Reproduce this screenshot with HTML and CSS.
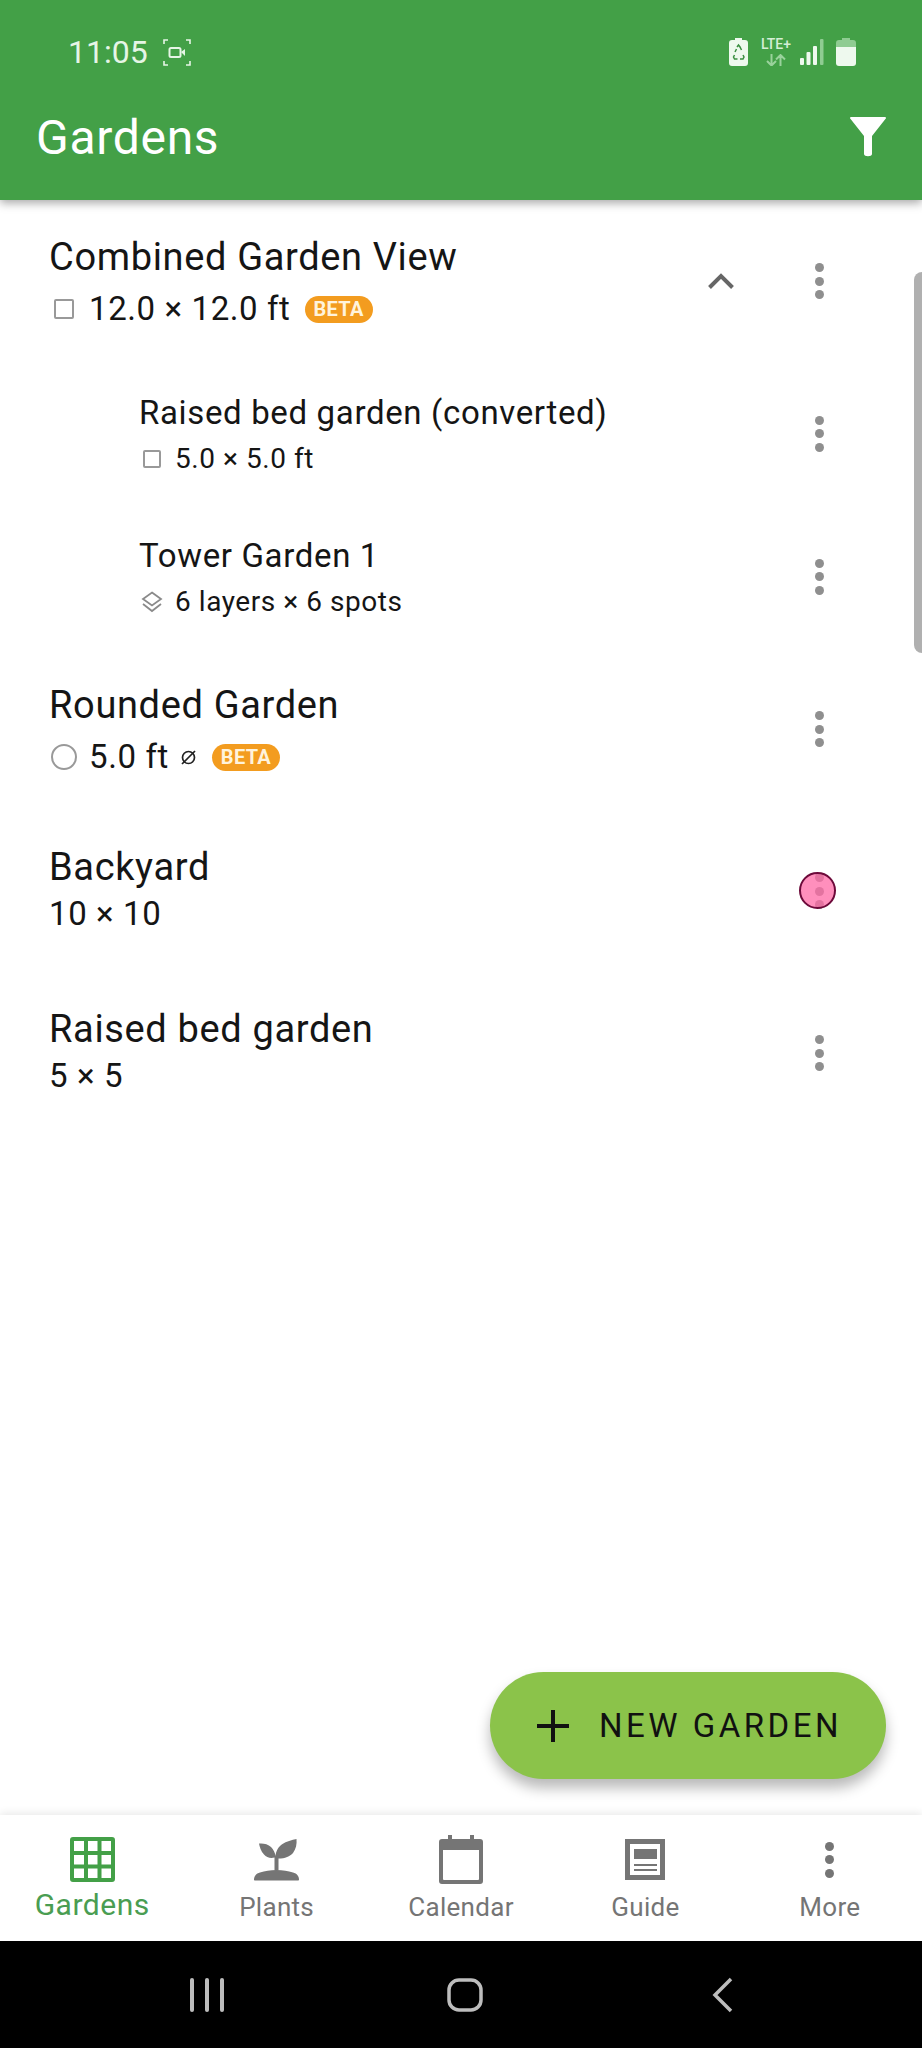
FILE: index.html
```html
<!DOCTYPE html>
<html lang="en">
<head>
  <meta charset="UTF-8" />
  <meta name="viewport" content="width=device-width, initial-scale=1.0"/>
  <title>Gardens</title>
  <link rel="stylesheet" href="styles.css">
</head>
<body>
  <div class="screen">
    <header class="appbar">
      <div class="status">
        <span class="clock">11:05</span>
        <svg class="rec" width="28" height="27" viewBox="0 0 28 27" fill="none" stroke="#e6f5e6" stroke-width="1.600">
          <path d="M1 5V1h4M23 1h4v4M27 22v4h-4M5 26H1v-4"/>
          <rect x="6.500" y="9" width="11" height="9" rx="1.500" stroke-width="2"/>
          <path d="M18 13l4-3v7z" fill="#e6f5e6" stroke="none"/>
        </svg>
        <span class="status-right">
          <svg width="19" height="28" viewBox="0 0 19 28">
            <path d="M6 0h7v2h3a3 3 0 0 1 3 3v20a3 3 0 0 1-3 3H3a3 3 0 0 1-3-3V5a3 3 0 0 1 3-3h3z" fill="#eef9ee"/>
            <path d="M8 9l1.500-2 1.500 2 1.500 3M5.500 17l-1 2 1 2h3M11 21h3l1-2-1-2M6 14l1.500-3" fill="none" stroke="#3a8f40" stroke-width="1.500"/>
          </svg>
          <span class="lte">
            <span class="lte-text">LTE+</span>
            <svg width="20" height="12" viewBox="0 0 20 12" fill="none" stroke="#9ad29c" stroke-width="2">
              <path d="M5.500 0v11M1 7l4.500 4.500L10 7M14.500 12V1M10 5.500L14.500 1 19 5.500"/>
            </svg>
          </span>
          <svg class="signal" width="24" height="26" viewBox="0 0 24 26">
            <rect x="0" y="19" width="4" height="7" rx="1" fill="#eef9ee"/>
            <rect x="6.500" y="13" width="4" height="13" rx="1" fill="#eef9ee"/>
            <rect x="13" y="7" width="4" height="19" rx="1" fill="#eef9ee"/>
            <rect x="20" y="0" width="3.500" height="26" rx="1" fill="#8fcc92"/>
          </svg>
          <svg width="20" height="28" viewBox="0 0 20 28">
            <path d="M6 0h8v2h3a3 3 0 0 1 3 3v4H0V5a3 3 0 0 1 3-3h3z" fill="#8fcc92"/>
            <path d="M0 9h20v16a3 3 0 0 1-3 3H3a3 3 0 0 1-3-3z" fill="#eef9ee"/>
          </svg>
        </span>
      </div>
      <div class="toolbar">
        <h1 class="page-title">Gardens</h1>
        <svg width="36" height="40" viewBox="0 0 36 40">
          <path d="M1 0h34a1 1 0 0 1 .8 1.600L22 19v18c0 3-8 3-8 0V19L.2 1.600A1 1 0 0 1 1 0z" fill="#fff"/>
        </svg>
      </div>
    </header>

    <main class="list">
      <div class="row">
        <div class="row-text">
          <div class="name">Combined Garden View</div>
          <div class="meta">
            <span class="shape-square"></span>
            <span>12.0 × 12.0 ft</span>
            <span class="beta">BETA</span>
          </div>
        </div>
        <svg class="chevron" width="26" height="16" viewBox="0 0 26 16" fill="none" stroke="#666" stroke-width="4">
          <path d="M1.500 14.500L13 3l11.500 11.500"/>
        </svg>
        <div class="kebab"><i></i><i></i><i></i></div>
      </div>

      <div class="row row-child">
        <div class="row-text">
          <div class="name">Raised bed garden (converted)</div>
          <div class="meta">
            <span class="shape-square"></span>
            <span>5.0 × 5.0 ft</span>
          </div>
        </div>
        <div class="kebab"><i></i><i></i><i></i></div>
      </div>

      <div class="row row-child">
        <div class="row-text">
          <div class="name">Tower Garden 1</div>
          <div class="meta">
            <svg class="shape-layers" width="22" height="22" viewBox="0 0 22 22" fill="none" stroke="#8a8a8a" stroke-width="1.800">
              <path d="M11 1.500L20 8l-9 6.500L2 8z"/>
              <path d="M2 13l9 7 9-7"/>
            </svg>
            <span>6 layers × 6 spots</span>
          </div>
        </div>
        <div class="kebab"><i></i><i></i><i></i></div>
      </div>

      <div class="row">
        <div class="row-text">
          <div class="name">Rounded Garden</div>
          <div class="meta">
            <span class="shape-circle"></span>
            <span>5.0 ft</span>
            <svg class="diameter" width="17" height="17" viewBox="0 0 17 17" fill="none" stroke="#222" stroke-width="1.700">
              <circle cx="8.500" cy="8.500" r="6"/>
              <path d="M2 15L15 2"/>
            </svg>
            <span class="beta">BETA</span>
          </div>
        </div>
        <div class="kebab"><i></i><i></i><i></i></div>
      </div>

      <div class="row">
        <div class="row-text">
          <div class="name">Backyard</div>
          <div class="meta meta-plain">10 × 10</div>
        </div>
        <div class="kebab"><i></i><i></i><i></i><span class="touch"></span></div>
      </div>

      <div class="row">
        <div class="row-text">
          <div class="name">Raised bed garden</div>
          <div class="meta meta-plain">5 × 5</div>
        </div>
        <div class="kebab"><i></i><i></i><i></i></div>
      </div>

      <div class="scrollbar"></div>

      <button class="fab">
        <svg width="32" height="32" viewBox="0 0 32 32" fill="#111">
          <rect x="14" y="0" width="4" height="32"/>
          <rect x="0" y="14" width="32" height="4"/>
        </svg>
        <span>NEW GARDEN</span>
      </button>
    </main>

    <nav class="tabs">
      <div class="tab tab-active">
        <svg width="45" height="45" viewBox="0 0 45 45" fill="#43a047">
          <path fill-rule="evenodd" d="M3 0h39a3 3 0 0 1 3 3v39a3 3 0 0 1-3 3H3a3 3 0 0 1-3-3V3a3 3 0 0 1 3-3zM4 4v10h10V4zM18 4v10h9.500V4zM31.500 4v10H41V4zM4 18v9.500h10V18zM18 18v9.500h9.500V18zM31.500 18v9.500H41V18zM4 31.500V41h10v-9.500zM18 31.500V41h9.500v-9.500zM31.500 31.500V41H41v-9.500z"/>
        </svg>
        <span>Gardens</span>
      </div>
      <div class="tab">
        <svg width="45" height="42" viewBox="0 0 45 42" fill="#757575">
          <path d="M0 41c0-3 2-6 6-7 5-1.500 10-2.500 16.500-2.500S34 32.500 39 34c4 1 6 4 6 7 0 .6-.4 1-1 1H1c-.6 0-1-.4-1-1z"/>
          <path d="M20.500 32V19c-4 1-8 0-10.500-3C7 13 5.500 8 5 5c4-.5 9 .5 12 3.500 2.500 2.500 4 5.500 4.500 9 .5-5 3-9.500 7-12C32 3 38 1.500 42.500.5c.5 5-.5 10-3.500 14-3 3.500-8 5.500-14.500 5.500V32z"/>
        </svg>
        <span>Plants</span>
      </div>
      <div class="tab">
        <svg width="44" height="49" viewBox="0 0 44 49">
          <path fill="#757575" fill-rule="evenodd" d="M9 0h4v4h18V0h4v4h6a3 3 0 0 1 3 3v39a3 3 0 0 1-3 3H3a3 3 0 0 1-3-3V7a3 3 0 0 1 3-3h6zM4 15v29a1 1 0 0 0 1 1h34a1 1 0 0 0 1-1V15z"/>
        </svg>
        <span>Calendar</span>
      </div>
      <div class="tab">
        <svg width="40" height="41" viewBox="0 0 40 41">
          <path fill="#757575" fill-rule="evenodd" d="M0 0h40v41H0zM5 5v31h30V5z"/>
          <rect x="9" y="10" width="23" height="10" fill="#757575"/>
          <rect x="9" y="25" width="23" height="2" fill="#757575"/>
          <rect x="9" y="30" width="23" height="2" fill="#757575"/>
        </svg>
        <span>Guide</span>
      </div>
      <div class="tab">
        <div class="kebab kebab-nav"><i></i><i></i><i></i></div>
        <span>More</span>
      </div>
    </nav>

    <footer class="sysnav">
      <svg width="34" height="34" viewBox="0 0 34 34" fill="#bdbdbd">
        <rect x="0" y="0" width="4" height="34" rx="2"/>
        <rect x="15" y="0" width="4" height="34" rx="2"/>
        <rect x="30" y="0" width="4" height="34" rx="2"/>
      </svg>
      <svg width="36" height="34" viewBox="0 0 36 34" fill="none" stroke="#bdbdbd" stroke-width="3.500">
        <rect x="2" y="2" width="32" height="30" rx="10"/>
      </svg>
      <svg class="sysnav-back" width="22" height="36" viewBox="0 0 22 36" fill="none" stroke="#bdbdbd" stroke-width="3.500">
        <path d="M20 2L4 18l16 16"/>
      </svg>
    </footer>
  </div>
</body>
</html>
```
FILE: styles.css
```css
:root {
  --green: #43a047;
  --lime: #8bc34a;
  --orange: #f39c1f;
  --text: #151515;
  --grey: #757575;
}

* {
  box-sizing: border-box;
}

body {
  margin: 0;
  background: #fff;
  color: var(--text);
  font-family: Roboto, 'Noto Sans', sans-serif;
}

.screen {
  width: 922px;
  height: 2048px;
  display: flex;
  flex-direction: column;
  overflow: hidden;
}

/* top green bar */
.appbar {
  height: 200px;
  flex: none;
  background: var(--green);
  color: #fff;
  position: relative;
  z-index: 2;
  box-shadow: 0 3px 9px rgba(0, 0, 0, 0.35);
}

.status {
  height: 110px;
  padding: 38px 66px 0 68px;
  display: flex;
  align-items: flex-start;
}

.clock {
  font-size: 32px;
  line-height: 28px;
  color: #e6f5e6;
}

.rec {
  margin: 1px 0 0 15px;
}

.status-right {
  margin-left: auto;
  display: flex;
  align-items: flex-start;
}

.lte {
  width: 32px;
  margin-left: 12px;
  display: flex;
  flex-direction: column;
  align-items: center;
  gap: 4px;
}

.lte-text {
  font-size: 14px;
  line-height: 12px;
  font-weight: 500;
  color: #d5eed6;
  white-space: nowrap;
}

.signal {
  margin: 1px 12px 0 8px;
}

.toolbar {
  padding: 0 36px 0 36px;
  display: flex;
  justify-content: space-between;
  align-items: flex-start;
}

.page-title {
  margin: 0;
  font-size: 48px;
  line-height: 56px;
  font-weight: 400;
  letter-spacing: 0.7px;
}

.toolbar svg {
  margin-top: 7px;
}

/* garden rows */
.list {
  flex: 1;
  position: relative;
}

.row {
  height: 162px;
  padding: 0 94px 0 49px;
  display: flex;
  align-items: center;
}

.row-text {
  flex: 1;
}

.name {
  font-size: 38px;
  line-height: 48px;
  letter-spacing: 0.65px;
}

.meta {
  margin-top: 8px;
  display: flex;
  align-items: center;
  font-size: 33px;
  line-height: 40px;
  letter-spacing: 0.6px;
}

.meta-plain {
  display: block;
  margin-top: 3px;
  margin-bottom: 5px;
}

.row-child {
  height: 143px;
  padding-left: 139px;
}

.row-child .name {
  font-size: 33px;
  line-height: 44px;
}

.row-child .meta {
  margin-top: 6px;
  font-size: 28px;
  line-height: 36px;
  letter-spacing: 0.55px;
}

.shape-square {
  width: 20px;
  height: 20px;
  margin: 0 15px 0 5px;
  border: 2.500px solid #999;
  border-radius: 2px;
}

.row-child .shape-square {
  width: 18px;
  height: 18px;
  margin: 0 14px 0 4px;
}

.shape-layers {
  margin: 0 12px 0 2px;
}

.shape-circle {
  width: 26px;
  height: 26px;
  margin: 0 12px 0 2px;
  border: 2.500px solid #999;
  border-radius: 50%;
}

.diameter {
  margin-left: 11px;
}

.beta {
  margin-left: 14px;
  padding: 0 9px;
  height: 27px;
  border-radius: 14px;
  background: var(--orange);
  color: #fff3dc;
  font-size: 20px;
  line-height: 27px;
  font-weight: 700;
  letter-spacing: 0.3px;
}

.diameter + .beta {
  margin-left: 15px;
}

.chevron {
  margin-right: 76px;
}

.kebab {
  width: 18px;
  position: relative;
  display: flex;
  flex-direction: column;
  align-items: center;
  gap: 4.500px;
}

.kebab i {
  width: 9px;
  height: 9px;
  border-radius: 50%;
  background: #8f8f8f;
}

.kebab-nav i {
  background: var(--grey);
}

/* touch indicator left on by the screen recorder */
.touch {
  position: absolute;
  left: -11px;
  top: -1px;
  width: 37px;
  height: 37px;
  border-radius: 50%;
  border: 2.500px solid #6d0a3a;
  background: rgba(255, 105, 165, 0.75);
}

.scrollbar {
  position: absolute;
  right: 0;
  top: 72px;
  width: 8px;
  height: 381px;
  border-radius: 8px 0 0 8px;
  background: #b0b0b0;
}

.fab {
  position: absolute;
  right: 36px;
  bottom: 36px;
  width: 396px;
  height: 107px;
  padding: 0 0 0 47px;
  border: none;
  border-radius: 54px;
  background: var(--lime);
  color: #111;
  display: flex;
  align-items: center;
  gap: 30px;
  font-family: inherit;
  font-size: 33px;
  letter-spacing: 3.500px;
  box-shadow: 0 9px 14px rgba(0, 0, 0, 0.28);
}

/* bottom tabs */
.tabs {
  height: 126px;
  flex: none;
  background: #fff;
  display: flex;
  position: relative;
  box-shadow: 0 -2px 8px rgba(0, 0, 0, 0.09);
}

.tab {
  flex: 1;
  height: 100%;
  padding-top: 20px;
  display: flex;
  flex-direction: column;
  align-items: center;
  color: var(--grey);
  font-size: 26px;
  letter-spacing: 0.3px;
}

.tab svg,
.tab .kebab {
  height: 49px;
  flex: none;
}

.tab .kebab {
  justify-content: center;
}

.tab-active {
  color: #4a9d52;
  font-size: 30px;
  letter-spacing: 0.5px;
}

.tab span {
  line-height: 34px;
  margin-top: 6px;
}

.tab-active span {
  margin-top: 4px;
}

/* android nav */
.sysnav {
  height: 107px;
  flex: none;
  background: #000;
  padding: 0 0 0 190px;
  display: flex;
  gap: 223px;
  align-items: center;
}

.sysnav-back {
  margin-left: 5px;
}
```
